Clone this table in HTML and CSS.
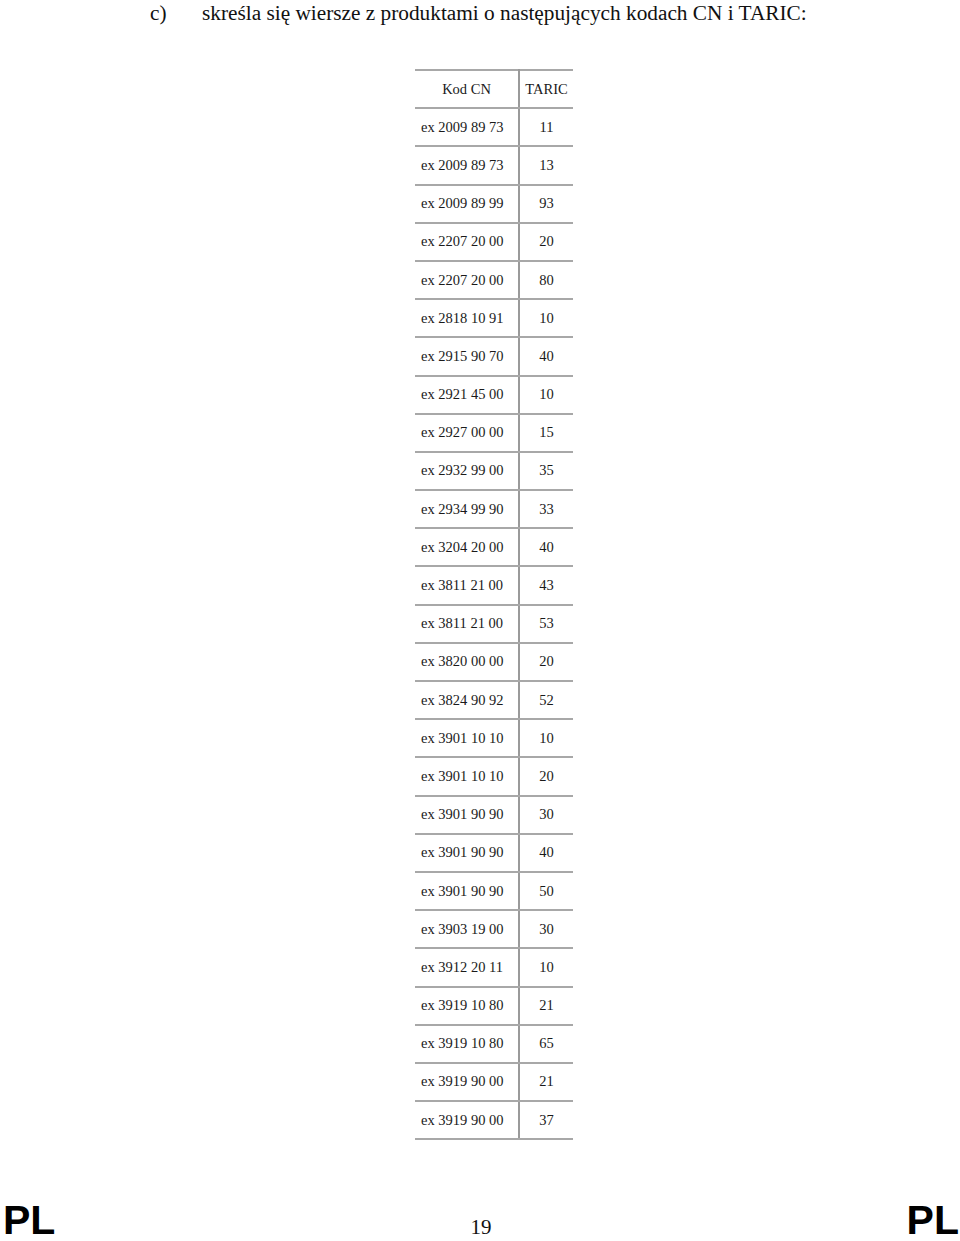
FILE: index.html
```html
<!DOCTYPE html>
<html lang="pl">
<head>
<meta charset="utf-8">
<title>CN i TARIC</title>
<link rel="stylesheet" href="styles.css">
</head>
<body>
<div class="page">
  <p class="item"><span class="item-label">c)</span><span class="item-text">skreśla się wiersze z produktami o następujących kodach CN i TARIC:</span></p>
  <table class="codes">
    <thead>
      <tr><th class="cn">Kod CN</th><th class="taric">TARIC</th></tr>
    </thead>
    <tbody>
      <tr><td class="cn">ex 2009 89 73</td><td class="taric">11</td></tr>
      <tr><td class="cn">ex 2009 89 73</td><td class="taric">13</td></tr>
      <tr><td class="cn">ex 2009 89 99</td><td class="taric">93</td></tr>
      <tr><td class="cn">ex 2207 20 00</td><td class="taric">20</td></tr>
      <tr><td class="cn">ex 2207 20 00</td><td class="taric">80</td></tr>
      <tr><td class="cn">ex 2818 10 91</td><td class="taric">10</td></tr>
      <tr><td class="cn">ex 2915 90 70</td><td class="taric">40</td></tr>
      <tr><td class="cn">ex 2921 45 00</td><td class="taric">10</td></tr>
      <tr><td class="cn">ex 2927 00 00</td><td class="taric">15</td></tr>
      <tr><td class="cn">ex 2932 99 00</td><td class="taric">35</td></tr>
      <tr><td class="cn">ex 2934 99 90</td><td class="taric">33</td></tr>
      <tr><td class="cn">ex 3204 20 00</td><td class="taric">40</td></tr>
      <tr><td class="cn">ex 3811 21 00</td><td class="taric">43</td></tr>
      <tr><td class="cn">ex 3811 21 00</td><td class="taric">53</td></tr>
      <tr><td class="cn">ex 3820 00 00</td><td class="taric">20</td></tr>
      <tr><td class="cn">ex 3824 90 92</td><td class="taric">52</td></tr>
      <tr><td class="cn">ex 3901 10 10</td><td class="taric">10</td></tr>
      <tr><td class="cn">ex 3901 10 10</td><td class="taric">20</td></tr>
      <tr><td class="cn">ex 3901 90 90</td><td class="taric">30</td></tr>
      <tr><td class="cn">ex 3901 90 90</td><td class="taric">40</td></tr>
      <tr><td class="cn">ex 3901 90 90</td><td class="taric">50</td></tr>
      <tr><td class="cn">ex 3903 19 00</td><td class="taric">30</td></tr>
      <tr><td class="cn">ex 3912 20 11</td><td class="taric">10</td></tr>
      <tr><td class="cn">ex 3919 10 80</td><td class="taric">21</td></tr>
      <tr><td class="cn">ex 3919 10 80</td><td class="taric">65</td></tr>
      <tr><td class="cn">ex 3919 90 00</td><td class="taric">21</td></tr>
      <tr><td class="cn">ex 3919 90 00</td><td class="taric">37</td></tr>
    </tbody>
  </table>
  <footer class="footer">
    <span class="lang">PL</span>
    <span class="pagenum">19</span>
    <span class="lang">PL</span>
  </footer>
</div>
</body>
</html>
```

FILE: styles.css
```css
html, body {
  margin: 0;
  padding: 0;
  background: #ffffff;
}

.page {
  width: 960px;
  height: 1241px;
  display: flex;
  flex-direction: column;
  align-items: flex-start;
  font-family: "Liberation Serif", "Times New Roman", serif;
  color: #111111;
  overflow: hidden;
}

.item {
  margin: 1px 0 0 0;
  padding-left: 150px;
  font-size: 21.3px;
  line-height: 25px;
  display: flex;
}

.item-label {
  width: 52px;
  flex: none;
}

.codes {
  margin: 43px 0 0 415px;
  border-collapse: collapse;
  font-size: 14.5px;
  color: #1a1a1a;
}

.codes th,
.codes td {
  height: 36.2px;
  padding: 0;
  font-weight: normal;
  border-top: 2px solid #a8a8a8;
  border-bottom: 2px solid #a8a8a8;
  vertical-align: middle;
}

.codes .cn {
  width: 97px;
  padding-left: 6px;
  text-align: left;
  border-right: 2px solid #9a9a9a;
}

.codes th.cn {
  text-align: center;
  padding-left: 0;
  width: 103px;
}

.codes .taric {
  width: 53px;
  text-align: center;
}

.footer {
  margin-top: auto;
  align-self: stretch;
  display: flex;
  justify-content: space-between;
  align-items: baseline;
  padding: 0 1px 1px 3px;
}

.lang {
  font-family: "Liberation Sans", Arial, sans-serif;
  font-weight: bold;
  font-size: 41px;
  line-height: 36px;
  color: #000000;
}

.pagenum {
  font-family: "Liberation Serif", "Times New Roman", serif;
  font-size: 21px;
  color: #111111;
}
```
